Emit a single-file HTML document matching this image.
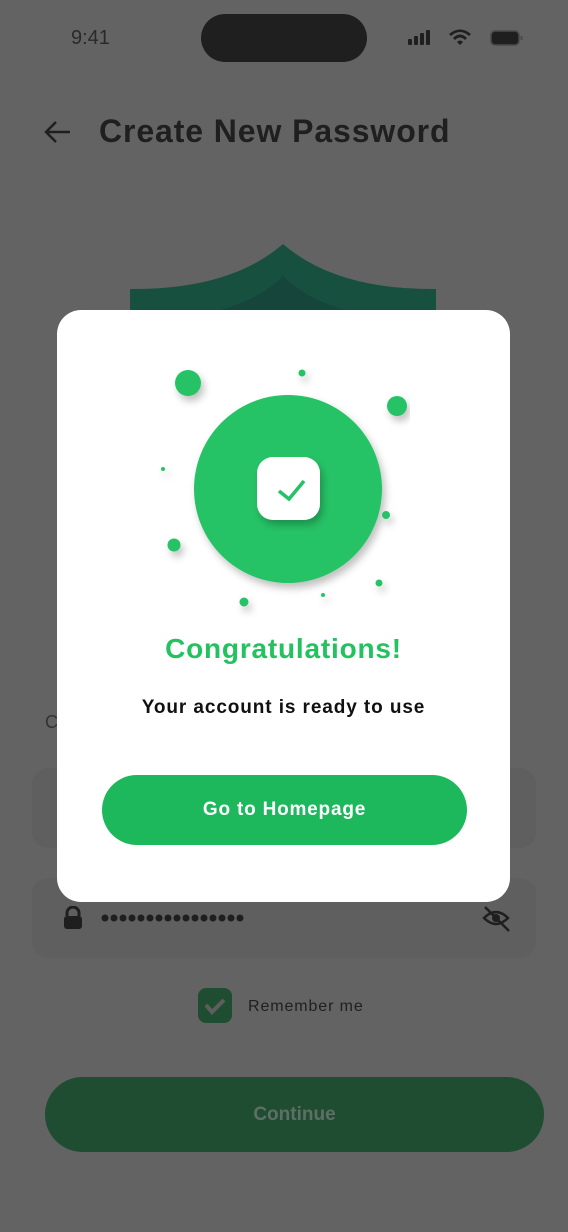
<!DOCTYPE html>
<html><head><style>
body{margin:0;width:568px;height:1232px;background:#636363;position:relative;overflow:hidden;font-family:"Liberation Sans",sans-serif}
.a{position:absolute}
</style></head><body>
<div class="a" style="left:71px;top:27px;font-size:20px;color:#2a2a2a;letter-spacing:0">9:41</div>
<div class="a" style="left:201px;top:14px;width:166px;height:48px;border-radius:24px;background:#1f1f1f"></div>
<svg class="a" style="left:405px;top:28px" width="130" height="22" viewBox="0 0 130 22">
<rect x="3" y="11" width="4" height="6" rx="1" fill="#1f1f1f"/><rect x="9" y="8" width="4" height="9" rx="1" fill="#1f1f1f"/><rect x="15" y="5" width="4" height="12" rx="1" fill="#1f1f1f"/><rect x="21" y="2" width="4" height="15" rx="1" fill="#1f1f1f"/>
<path d="M55 17 L52 14 Q55 11 58 14Z M48 10 Q55 3 62 10 L60 12 Q55 7 50 12Z M44 6 Q55 -3 66 6 L64 8 Q55 0 46 8Z" fill="#1f1f1f"/>
<rect x="86" y="3" width="28" height="14" rx="4" fill="#1f1f1f" stroke="#4a4a4a" stroke-width="1.5"/>
<rect x="115.5" y="8" width="2" height="4" fill="#4a4a4a"/>
</svg>
<svg class="a" style="left:42px;top:120px" width="32" height="24"><path d="M28 12H4M14 2L4 12l10 10" stroke="#1f1f1f" stroke-width="2.5" fill="none"/></svg>
<div class="a" style="left:99px;top:113px;font-size:32px;font-weight:bold;color:#1f1f1f;letter-spacing:0.9px">Create New Password</div>
<svg class="a" style="left:130px;top:240px" width="308" height="80"><path d="M0 49 Q100 50 153 4 Q206 50 306 49 V80 H0Z" fill="#18503f"/><path d="M40 80 Q120 70 153 36 Q186 70 266 80Z" fill="#16453c"/></svg>
<div class="a" style="left:45px;top:712px;font-size:18px;color:#333">C</div>
<div class="a" style="left:32px;top:768px;width:504px;height:80px;border-radius:16px;background:#5f5f5f"></div>
<div class="a" style="left:32px;top:878px;width:504px;height:80px;border-radius:16px;background:#5f5f5f"></div>
<svg class="a" style="left:62px;top:906px" width="22" height="24"><path d="M5 10V7a6 6 0 0112 0v3" stroke="#1f1f1f" stroke-width="3" fill="none"/><rect x="2" y="10" width="18" height="13" rx="3" fill="#1f1f1f"/></svg>
<svg class="a" style="left:100px;top:912px" width="150" height="12"><g fill="#1f1f1f">
<circle cx="5" cy="6" r="3.5"/><circle cx="14" cy="6" r="3.5"/><circle cx="23" cy="6" r="3.5"/><circle cx="32" cy="6" r="3.5"/><circle cx="41" cy="6" r="3.5"/><circle cx="50" cy="6" r="3.5"/><circle cx="59" cy="6" r="3.5"/><circle cx="68" cy="6" r="3.5"/><circle cx="77" cy="6" r="3.5"/><circle cx="86" cy="6" r="3.5"/><circle cx="95" cy="6" r="3.5"/><circle cx="104" cy="6" r="3.5"/><circle cx="113" cy="6" r="3.5"/><circle cx="122" cy="6" r="3.5"/><circle cx="131" cy="6" r="3.5"/><circle cx="140" cy="6" r="3.5"/></g></svg>
<svg class="a" style="left:482px;top:905px" width="30" height="28"><path d="M2 13Q14 1 26 13Q14 25 2 13Z" stroke="#1f1f1f" stroke-width="2.5" fill="none"/><circle cx="14" cy="13" r="4" fill="#1f1f1f"/><path d="M3 2L27 26" stroke="#1f1f1f" stroke-width="2.5"/></svg>
<div class="a" style="left:198px;top:988px;width:34px;height:35px;border-radius:8px;background:#1e4d31"></div>
<svg class="a" style="left:198px;top:988px" width="34" height="35"><path d="M8 17l6 7 12-12" stroke="#5e5e5e" stroke-width="4" fill="none"/></svg>
<div class="a" style="left:248px;top:998px;font-size:16px;color:#1f1f1f;letter-spacing:0.9px">Remember me</div>
<div class="a" style="left:45px;top:1077px;width:499px;height:75px;border-radius:38px;background:#1e4d31;color:#5f6f65;font-size:19px;font-weight:bold;text-align:center;line-height:75px">Continue</div>

<div class="a" style="left:57px;top:310px;width:453px;height:592px;border-radius:24px;background:#fff"></div>
<svg class="a" style="left:150px;top:360px" width="260" height="260">
<defs><filter id="s" x="-50%" y="-50%" width="200%" height="200%"><feDropShadow dx="3" dy="5" stdDeviation="4" flood-opacity="0.25"/></filter></defs>
<g fill="#25c366" filter="url(#s)">
<circle cx="138" cy="129" r="94"/>
<circle cx="38" cy="23" r="13"/><circle cx="152" cy="13" r="3.5"/><circle cx="247" cy="46" r="10"/><circle cx="13" cy="109" r="2"/><circle cx="236" cy="155" r="4"/><circle cx="24" cy="185" r="6.5"/><circle cx="229" cy="223" r="3.5"/><circle cx="94" cy="242" r="4.5"/><circle cx="173" cy="235" r="2"/>
</g>
<rect x="107" y="97" width="63" height="63" rx="16" fill="#fff" filter="url(#s)"/>
<path d="M129 131l10 8 15-18" stroke="#25c366" stroke-width="3.5" fill="none"/>
</svg>
<div class="a" style="left:57px;top:633px;width:453px;text-align:center;font-size:28px;font-weight:bold;color:#22c35f;letter-spacing:0.8px">Congratulations!</div>
<div class="a" style="left:57px;top:697px;width:453px;text-align:center;font-size:19px;font-weight:bold;color:#111;letter-spacing:0.9px">Your account is ready to use</div>
<div class="a" style="left:102px;top:775px;width:365px;height:70px;border-radius:35px;background:#1db85c;color:#fff;font-size:19px;font-weight:bold;text-align:center;line-height:70px;letter-spacing:0.8px">Go to Homepage</div>
</body></html>
